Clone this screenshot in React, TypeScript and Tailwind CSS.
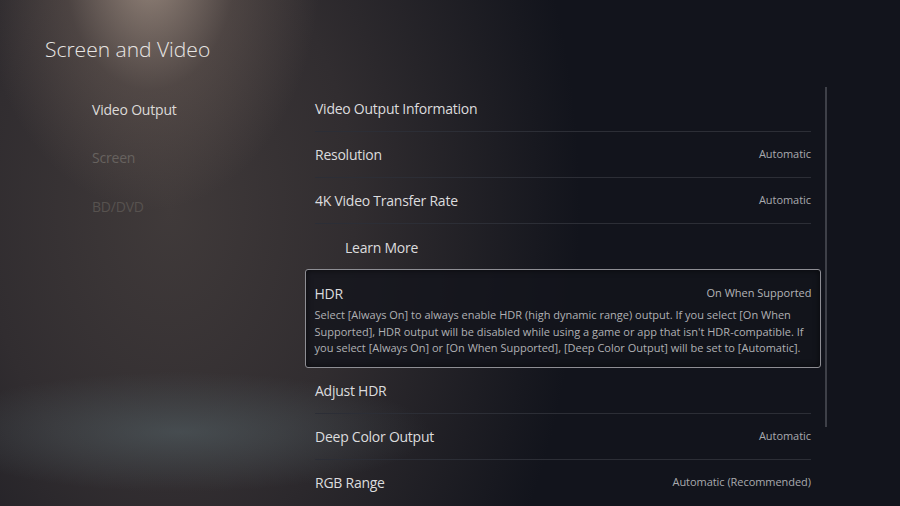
import React from "react";

const font = { fontFamily: '"Open Sans", "Noto Sans", sans-serif' };

function Row({ label, value, indent = false, last = false }: { label: string; value?: string; indent?: boolean; last?: boolean }) {
  return (
    <div className={`flex h-[46px] items-center justify-between ${last ? "" : "border-b border-[#2c2e36]"}`}>
      <span className={`text-[14px] tracking-[-0.25px] text-[#dcdcde] ${indent ? "pl-[30px]" : ""}`}>{label}</span>
      {value && <span className="text-[11px] tracking-[-0.05px] text-[#a9aaae]">{value}</span>}
    </div>
  );
}

export default function App() {
  return (
    <div
      style={font}
      className="relative h-[506px] w-[900px] overflow-hidden bg-[#12141c] bg-[radial-gradient(ellipse_170px_240px_at_150px_-30px,rgba(185,165,150,0.72),rgba(130,112,102,0.32)_50%,rgba(100,90,85,0)_100%),radial-gradient(ellipse_250px_60px_at_180px_432px,rgba(85,100,105,0.55),rgba(80,90,95,0)_100%),radial-gradient(ellipse_410px_620px_at_170px_210px,#403a3a_0%,#312d30_45%,rgba(18,20,28,0)_100%)]"
    >
      <div className="pl-[45px] pt-[33px] text-[21px] font-light leading-[32px] text-[#e8e6e4]">Screen and Video</div>
      <div className="mt-[21px] flex">
        <div className="w-[270px] pl-[92px] text-[14px] tracking-[-0.2px]">
          <div className="flex h-[46px] items-center text-[#dcdad8]">Video Output</div>
          <div className="mt-[2px] flex h-[46px] items-center text-[#67625f]">Screen</div>
          <div className="mt-[3px] flex h-[46px] items-center text-[#57524f]">BD/DVD</div>
        </div>
        <div className="relative ml-[35px] w-[516px]">
          <div className="pl-[10px] pr-[10px]">
            <Row label="Video Output Information" />
            <Row label="Resolution" value="Automatic" />
            <Row label="4K Video Transfer Rate" value="Automatic" />
            <Row label="Learn More" indent last />
          </div>
          <div className="-mt-[1px] rounded-[3px] border-[1.5px] border-[#8e8e94] bg-[#13141c]/80 pb-[10px] pl-[8.5px] pr-[8.5px] pt-[13px] shadow-[inset_0_0_6px_rgba(0,0,0,0.6)]">
            <div className="flex items-center justify-between">
              <span className="text-[14px] tracking-[-0.25px] text-[#dcdcde]">HDR</span>
              <span className="text-[11px] text-[#b4b5b8]">On When Supported</span>
            </div>
            <p className="mt-[3px] pr-[6px] text-[11px] leading-[16.5px] tracking-[0px] text-[#b0b1b4]">
              Select [Always On] to always enable HDR (high dynamic range) output. If you select [On When Supported], HDR output will be disabled while using a game or app that isn't HDR-compatible. If you select [Always On] or [On When Supported], [Deep Color Output] will be set to [Automatic].
            </p>
          </div>
          <div className="pl-[10px] pr-[10px]">
            <Row label="Adjust HDR" />
            <Row label="Deep Color Output" value="Automatic" />
            <Row label="RGB Range" value="Automatic (Recommended)" last />
          </div>
        </div>
        <div className="ml-[4px] mt-[1px] h-[340px] w-[2px] bg-[#3e4048]" />
      </div>
    </div>
  );
}
